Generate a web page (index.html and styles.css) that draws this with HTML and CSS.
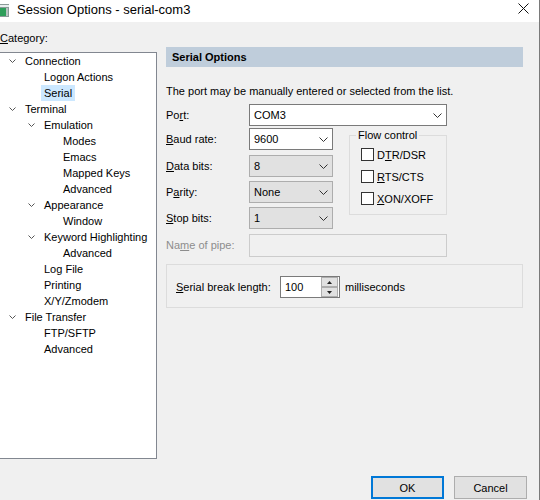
FILE: index.html
```html
<!DOCTYPE html>
<html>
<head>
<meta charset="utf-8">
<link rel="stylesheet" href="styles.css">
</head>
<body>
<div class="win">
  <div class="titlebar">
    <svg class="app-icon" width="9" height="13" viewBox="0 0 9 13">
      <rect x="0" y="0" width="9" height="13" fill="#8a9a98"/>
      <rect x="0" y="1" width="9" height="2" fill="#e8eeee"/>
      <rect x="0" y="4" width="6" height="8" fill="#2e9e5a"/>
      <rect x="6" y="4" width="2" height="8" fill="#b8c4c2"/>
    </svg>
    <span class="title">Session Options - serial-com3</span>
    <svg class="close" width="11" height="11" viewBox="0 0 11 11">
      <path d="M0.5 0.5 L10.5 10.5 M10.5 0.5 L0.5 10.5" stroke="#111" stroke-width="1" fill="none"/>
    </svg>
  </div>
  <div class="main">
    <div class="left">
      <div class="cat-label"><u>C</u>ategory:</div>
      <div class="tree">
        <div class="row l0"><span class="tw"><svg width="7" height="5" viewBox="0 0 7 5"><path d="M0.5 0.5 L3.5 3.5 L6.5 0.5" stroke="#555" fill="none"/></svg></span><span class="lbl">Connection</span></div>
        <div class="row l1"><span class="tw"></span><span class="lbl">Logon Actions</span></div>
        <div class="row l1"><span class="tw"></span><span class="lbl sel">Serial</span></div>
        <div class="row l0"><span class="tw"><svg width="7" height="5" viewBox="0 0 7 5"><path d="M0.5 0.5 L3.5 3.5 L6.5 0.5" stroke="#555" fill="none"/></svg></span><span class="lbl">Terminal</span></div>
        <div class="row l1"><span class="tw"><svg width="7" height="5" viewBox="0 0 7 5"><path d="M0.5 0.5 L3.5 3.5 L6.5 0.5" stroke="#555" fill="none"/></svg></span><span class="lbl">Emulation</span></div>
        <div class="row l2"><span class="tw"></span><span class="lbl">Modes</span></div>
        <div class="row l2"><span class="tw"></span><span class="lbl">Emacs</span></div>
        <div class="row l2"><span class="tw"></span><span class="lbl">Mapped Keys</span></div>
        <div class="row l2"><span class="tw"></span><span class="lbl">Advanced</span></div>
        <div class="row l1"><span class="tw"><svg width="7" height="5" viewBox="0 0 7 5"><path d="M0.5 0.5 L3.5 3.5 L6.5 0.5" stroke="#555" fill="none"/></svg></span><span class="lbl">Appearance</span></div>
        <div class="row l2"><span class="tw"></span><span class="lbl">Window</span></div>
        <div class="row l1"><span class="tw"><svg width="7" height="5" viewBox="0 0 7 5"><path d="M0.5 0.5 L3.5 3.5 L6.5 0.5" stroke="#555" fill="none"/></svg></span><span class="lbl">Keyword Highlighting</span></div>
        <div class="row l2"><span class="tw"></span><span class="lbl">Advanced</span></div>
        <div class="row l1"><span class="tw"></span><span class="lbl">Log File</span></div>
        <div class="row l1"><span class="tw"></span><span class="lbl">Printing</span></div>
        <div class="row l1"><span class="tw"></span><span class="lbl">X/Y/Zmodem</span></div>
        <div class="row l0"><span class="tw"><svg width="7" height="5" viewBox="0 0 7 5"><path d="M0.5 0.5 L3.5 3.5 L6.5 0.5" stroke="#555" fill="none"/></svg></span><span class="lbl">File Transfer</span></div>
        <div class="row l1"><span class="tw"></span><span class="lbl">FTP/SFTP</span></div>
        <div class="row l1"><span class="tw"></span><span class="lbl">Advanced</span></div>
      </div>
    </div>
    <div class="right">
      <div class="hdr">Serial Options</div>
      <div class="desc">The port may be manually entered or selected from the list.</div>
      <div class="form">
        <div class="flabel r1">Po<u>r</u>t:</div>
        <div class="combo edit wide r1"><span>COM3</span><svg width="9" height="5" viewBox="0 0 9 5"><path d="M0.5 0.5 L4.5 4.5 L8.5 0.5" stroke="#333" fill="none"/></svg></div>

        <div class="flabel r2"><u>B</u>aud rate:</div>
        <div class="combo edit r2"><span>9600</span><svg width="9" height="5" viewBox="0 0 9 5"><path d="M0.5 0.5 L4.5 4.5 L8.5 0.5" stroke="#333" fill="none"/></svg></div>

        <fieldset class="flow">
          <legend>Flow control</legend>
          <div class="cb-row"><span class="cb"></span><span>D<u>T</u>R/DSR</span></div>
          <div class="cb-row"><span class="cb"></span><span><u>R</u>TS/CTS</span></div>
          <div class="cb-row"><span class="cb"></span><span><u>X</u>ON/XOFF</span></div>
        </fieldset>

        <div class="flabel r3"><u>D</u>ata bits:</div>
        <div class="combo list r3"><span>8</span><svg width="9" height="5" viewBox="0 0 9 5"><path d="M0.5 0.5 L4.5 4.5 L8.5 0.5" stroke="#333" fill="none"/></svg></div>

        <div class="flabel r4">P<u>a</u>rity:</div>
        <div class="combo list r4"><span>None</span><svg width="9" height="5" viewBox="0 0 9 5"><path d="M0.5 0.5 L4.5 4.5 L8.5 0.5" stroke="#333" fill="none"/></svg></div>

        <div class="flabel r5"><u>S</u>top bits:</div>
        <div class="combo list r5"><span>1</span><svg width="9" height="5" viewBox="0 0 9 5"><path d="M0.5 0.5 L4.5 4.5 L8.5 0.5" stroke="#333" fill="none"/></svg></div>

        <div class="flabel r6 disabled">Na<u>m</u>e of pipe:</div>
        <div class="pipe r6"></div>
      </div>
      <div class="break-group">
        <span class="blabel"><u>S</u>erial break length:</span>
        <div class="spin">
          <span class="spin-val">100</span>
          <div class="spin-btns">
            <span class="sb"><svg width="5" height="3" viewBox="0 0 5 3"><path d="M2.5 0 L5 3 L0 3 Z" fill="#222"/></svg></span>
            <span class="sb"><svg width="5" height="3" viewBox="0 0 5 3"><path d="M0 0 L5 0 L2.5 3 Z" fill="#222"/></svg></span>
          </div>
        </div>
        <span class="ms">milliseconds</span>
      </div>
    </div>
  </div>
  <div class="buttons">
    <button class="btn ok">OK</button>
    <button class="btn">Cancel</button>
  </div>
</div>
</body>
</html>
```
FILE: styles.css
```css
* { box-sizing: border-box; }
html, body { margin: 0; padding: 0; }
body {
  width: 540px;
  height: 500px;
  overflow: hidden;
  background: #f0f0f0;
  font-family: "Liberation Sans", "Noto Sans", sans-serif;
  font-size: 11px;
  color: #000;
}
u { text-decoration: underline; text-underline-offset: 1px; }

.win {
  width: 540px;
  height: 500px;
  display: flex;
  flex-direction: column;
  border-right: 1px solid #7a7a7a;
  background: #f0f0f0;
}

.titlebar {
  flex: none;
  height: 22px;
  background: #fff;
  display: flex;
  align-items: center;
}
.app-icon { flex: none; margin-top: -2px; }
.title { margin-left: 8px; font-size: 13px; line-height: 22px; margin-top: -2px; }
.close { margin-left: auto; margin-right: 10px; margin-top: -6px; }

.main { flex: 1; display: flex; min-height: 0; }

.left {
  flex: none;
  width: 158px;
  margin-left: -1px;
  display: flex;
  flex-direction: column;
}
.cat-label {
  margin-top: 9px;
  padding-left: 1px;
  line-height: 14px;
  height: 14px;
}
.tree {
  margin-top: 7px;
  height: 407px;
  background: #fff;
  border: 1px solid #828790;
}
.row {
  display: flex;
  align-items: center;
  height: 16px;
  line-height: 16px;
  white-space: nowrap;
}
.row.l1 { padding-left: 19px; }
.row.l2 { padding-left: 38px; }
.tw {
  flex: none;
  width: 22px;
  padding-left: 9px;
  display: flex;
  align-items: center;
  height: 16px;
}
.lbl { padding: 0 3px; height: 16px; }
.lbl.sel { background: #cce8ff; }

.right {
  flex: none;
  width: 358px;
  margin-left: 9px;
  padding-top: 25px;
  display: flex;
  flex-direction: column;
}
.hdr {
  height: 20px;
  line-height: 20px;
  background: #bfcddb;
  font-weight: bold;
  padding-left: 6px;
  width: 357px;
}
.desc {
  margin-top: 16px;
  line-height: 16px;
  height: 16px;
}
.form {
  margin-top: 5px;
  display: grid;
  grid-template-columns: 83px 84px 16px 98px;
  grid-template-rows: 24px 27px 26px 26px 27px 23px;
}
.flabel { grid-column: 1; display: flex; align-items: center; height: 22px; }
.flabel.disabled { color: #8d8d8d; }
.r1 { grid-row: 1; }
.r2 { grid-row: 2; }
.r3 { grid-row: 3; }
.r4 { grid-row: 4; }
.r5 { grid-row: 5; }
.r6 { grid-row: 6; }

.combo {
  grid-column: 2;
  height: 22px;
  display: flex;
  align-items: center;
  justify-content: space-between;
  padding: 0 4px 0 4px;
}
.combo.wide { grid-column: 2 / 5; }
.combo.edit { background: #fff; border: 1px solid #7a7a7a; }
.combo.list { background: #e1e1e1; border: 1px solid #adadad; }
.combo svg { flex: none; }

.pipe {
  grid-column: 2 / 5;
  height: 23px;
  border: 1px solid #cccccc;
  background: #f0f0f0;
}

.flow {
  grid-column: 4;
  grid-row: 2 / 6;
  margin: 0;
  padding: 6px 0 0 11px;
  min-width: 0;
  height: 87px;
  border: 1px solid #dcdcdc;
  display: flex;
  flex-direction: column;
  gap: 9px;
}
.flow legend {
  padding: 0 2px;
  margin-left: -5px;
  line-height: 14px;
}
.cb-row {
  display: flex;
  align-items: center;
  height: 13px;
  gap: 3px;
}
.cb {
  flex: none;
  width: 13px;
  height: 13px;
  background: #fff;
  border: 1px solid #333;
}

.break-group {
  margin-top: 7px;
  width: 357px;
  height: 44px;
  border: 1px solid #dcdcdc;
  display: flex;
  align-items: flex-start;
  padding: 11px 0 0 9px;
}
.blabel { width: 104px; line-height: 22px; }
.spin {
  display: flex;
  width: 60px;
  height: 22px;
  background: #fff;
  border: 1px solid #7a7a7a;
}
.spin-val { flex: 1; padding-left: 4px; line-height: 20px; }
.spin-btns {
  width: 18px;
  display: flex;
  flex-direction: column;
  gap: 0;
  padding: 0 1px 0 0;
}
.sb {
  flex: 1;
  display: flex;
  align-items: center;
  justify-content: center;
  background: #e1e1e1;
  border: 1px solid #adadad;
}
.ms { margin-left: 5px; line-height: 22px; }

.buttons {
  flex: none;
  height: 23px;
  margin-bottom: 1px;
  display: flex;
  justify-content: flex-end;
  gap: 10px;
  padding-right: 12px;
}
.btn {
  width: 73px;
  height: 23px;
  background: #e1e1e1;
  border: 1px solid #adadad;
  font-family: inherit;
  font-size: 11px;
  color: #000;
  padding: 0;
  margin: 0;
}
.btn.ok { border: 2px solid #0078d7; }
```
